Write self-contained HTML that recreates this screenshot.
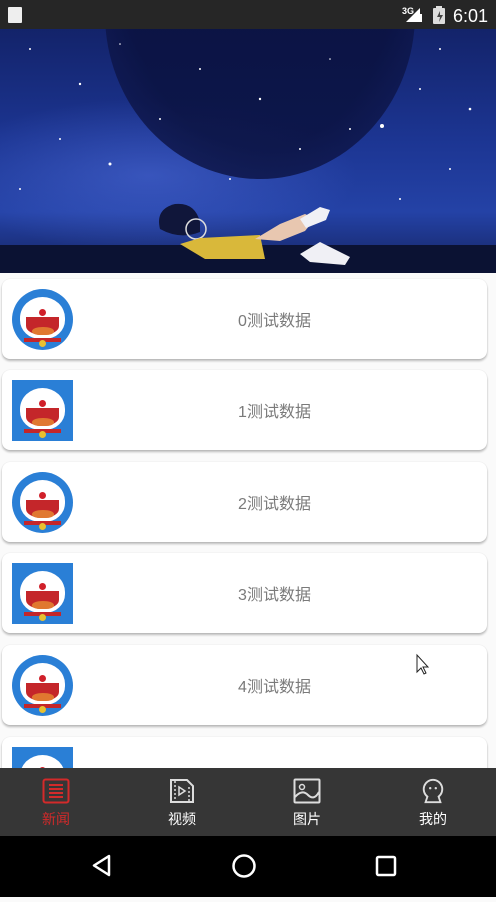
<!DOCTYPE html>
<html><head><meta charset="utf-8"><style>
*{margin:0;padding:0;box-sizing:border-box}
body{width:496px;height:897px;overflow:hidden;background:#fafafa;position:relative;font-family:"Liberation Sans","Noto Sans CJK SC",sans-serif}
.status{position:absolute;left:0;top:0;width:496px;height:29px;background:#262626;color:#fff}
.banner{position:absolute;left:0;top:29px;width:496px;height:244px;overflow:hidden;
background:radial-gradient(ellipse 60% 45% at 30% 60%,rgba(80,110,220,.5),transparent 70%),linear-gradient(180deg,#13236a 0%,#1c3592 45%,#2442a6 75%,#18296e 95%,#0a1030 100%)}
.arc{position:absolute;left:105px;top:-180px;width:310px;height:330px;border-radius:50%;background:radial-gradient(ellipse at 50% 40%,#0a113e 60%,#141f60 100%);opacity:.85}
.card{position:absolute;left:2px;width:485px;height:80px;background:#fff;border-radius:8px;box-shadow:0 2px 2px rgba(0,0,0,.25),0 0 1px rgba(0,0,0,.15)}
.card .t{position:absolute;left:60px;right:0;top:3px;line-height:80px;text-align:center;font-size:16px;color:#7a7a7a}
.pic{position:absolute;left:10px;top:10px;width:61px;height:61px;background:#2a7fd6;overflow:hidden}
.pic.r{border-radius:50%}
.face{position:absolute;left:8px;top:8px;width:45px;height:42px;background:#fff;border-radius:50% 50% 45% 45%}
.mouth{position:absolute;left:14px;top:28px;width:33px;height:18px;background:#c4262a;border-radius:0 0 50% 50%}
.tongue{position:absolute;left:20px;top:38px;width:22px;height:8px;background:#e07830;border-radius:50% 50% 40% 40%}
.nose{position:absolute;left:27px;top:20px;width:7px;height:7px;background:#d0202a;border-radius:50%}
.collar{position:absolute;left:12px;top:49px;width:37px;height:4px;background:#c4262a}
.bell{position:absolute;left:27px;top:51px;width:7px;height:7px;background:#e8c030;border-radius:50%}
.nav{position:absolute;left:0;top:768px;width:496px;height:68px;background:#363636}
.tab{position:absolute;top:0;width:124px;text-align:center;color:#fff;font-size:14px}
.tab svg{display:block;margin:10px auto 0}
.tab span{display:block;margin-top:5px}
.sys{position:absolute;left:0;top:836px;width:496px;height:61px;background:#000}
</style></head><body>
<div class="status">
<svg width="496" height="29" style="position:absolute;left:0;top:0">
<rect x="8" y="7" width="14" height="16" rx="1" fill="#eee"/>
<text x="402" y="14" font-size="9" fill="#fff" font-family="Liberation Sans" font-weight="bold">3G</text>
<path d="M406 22 L420 8 L420 22Z" fill="#fff"/><rect x="420" y="14" width="2" height="8" fill="#fff"/>
<rect x="433" y="8" width="12" height="16" rx="1" fill="#ddd"/><rect x="436" y="6" width="6" height="3" fill="#ddd"/>
<path d="M440 11 l-3 6h3l-1 5 4-7h-3z" fill="#444"/>
<text x="453" y="22" font-size="18" fill="#fff" font-family="Liberation Sans">6:01</text>
</svg></div>
<div class="banner">
<div class="arc"></div>
<svg width="496" height="244" style="position:absolute;left:0;top:0">
<g fill="#fff">
<circle cx="30" cy="20" r="1"/><circle cx="80" cy="55" r="1.2"/><circle cx="120" cy="15" r="0.8"/><circle cx="160" cy="90" r="1"/><circle cx="200" cy="40" r="1"/><circle cx="260" cy="70" r="1.2"/><circle cx="300" cy="120" r="1"/><circle cx="350" cy="100" r="1"/><circle cx="382" cy="97" r="2"/><circle cx="420" cy="60" r="1"/><circle cx="470" cy="80" r="1.3"/><circle cx="450" cy="140" r="1"/><circle cx="110" cy="135" r="1.5"/><circle cx="60" cy="110" r="1"/><circle cx="230" cy="150" r="1"/><circle cx="400" cy="170" r="1"/><circle cx="20" cy="160" r="1"/><circle cx="330" cy="30" r="0.8"/><circle cx="440" cy="20" r="1"/><circle cx="180" cy="180" r="1"/>
</g>
<rect x="0" y="216" width="496" height="28" fill="#0b1233"/>
<path d="M160 200 q-5 -20 15 -25 q20 -2 25 18 l0 10 q-20 8 -40 -3z" fill="#10163a"/>
<circle cx="196" cy="200" r="10" fill="none" stroke="#ddd" stroke-width="1.5"/>
<path d="M180 215 q10 -3 20 -6 l60 -3 l5 24 l-60 0z" fill="#d9b83a"/>
<path d="M255 210 l25 -15 l25 -10 l10 5 l-10 12 l-25 10z" fill="#e8c7b0"/>
<path d="M300 190 l20 -12 l10 3 l-4 10 l-20 8z" fill="#f0f0f5"/>
<path d="M300 225 l20 -12 l30 15 l-5 8 l-35 -3z" fill="#f0f0f5"/>
</svg>
</div>

<div class="card" style="top:279px"><div class="pic r"><div class="face"></div><div class="mouth"></div><div class="tongue"></div><div class="nose"></div><div class="collar"></div><div class="bell"></div></div><div class="t">0测试数据</div></div>
<div class="card" style="top:370px"><div class="pic"><div class="face"></div><div class="mouth"></div><div class="tongue"></div><div class="nose"></div><div class="collar"></div><div class="bell"></div></div><div class="t">1测试数据</div></div>
<div class="card" style="top:462px"><div class="pic r"><div class="face"></div><div class="mouth"></div><div class="tongue"></div><div class="nose"></div><div class="collar"></div><div class="bell"></div></div><div class="t">2测试数据</div></div>
<div class="card" style="top:553px"><div class="pic"><div class="face"></div><div class="mouth"></div><div class="tongue"></div><div class="nose"></div><div class="collar"></div><div class="bell"></div></div><div class="t">3测试数据</div></div>
<div class="card" style="top:645px"><div class="pic r"><div class="face"></div><div class="mouth"></div><div class="tongue"></div><div class="nose"></div><div class="collar"></div><div class="bell"></div></div><div class="t">4测试数据</div></div>
<div class="card" style="top:737px"><div class="pic"><div class="face"></div><div class="nose"></div></div><div class="t">5测试数据</div></div>

<svg width="30" height="30" style="position:absolute;left:412px;top:652px"><path d="M5 3 L5 20 L9 16 L12 22 L14 21 L11 15 L16 15 Z" fill="#fff" stroke="#222" stroke-width="1"/></svg>

<div class="nav">
<div class="tab" style="left:-6px;color:#d32a2a"><svg width="28" height="26" viewBox="0 0 28 26"><rect x="1.5" y="1.5" width="25" height="23" rx="2" fill="none" stroke="#d32a2a" stroke-width="2"/><path d="M7 7h14M7 11h14M7 15h14M7 19h14" stroke="#d32a2a" stroke-width="2"/></svg><span>新闻</span></div>
<div class="tab" style="left:120px"><svg width="26" height="26" viewBox="0 0 26 26"><path d="M2 2h16l6 6v16H2z" fill="none" stroke="#ddd" stroke-width="2"/><path d="M6 3v21M20 9v15" stroke="#ddd" stroke-width="1.5" stroke-dasharray="2 2"/><path d="M10 9l6 4-6 4z" fill="none" stroke="#ddd" stroke-width="1.5"/></svg><span>视频</span></div>
<div class="tab" style="left:245px"><svg width="28" height="26" viewBox="0 0 28 26"><rect x="1.5" y="1.5" width="25" height="23" rx="1" fill="none" stroke="#ddd" stroke-width="2"/><circle cx="9" cy="9" r="2.5" fill="none" stroke="#ddd" stroke-width="1.5"/><path d="M2 19q7-8 13-2t11-3" fill="none" stroke="#ddd" stroke-width="2"/></svg><span>图片</span></div>
<div class="tab" style="left:371px"><svg width="24" height="26" viewBox="0 0 24 28"><path d="M12 2a10 10 0 0 0-6 18l-2 6h16l-2-6a10 10 0 0 0-6-18z" fill="none" stroke="#ddd" stroke-width="2"/><circle cx="9" cy="11" r="1.3" fill="#ddd"/><circle cx="15" cy="11" r="1.3" fill="#ddd"/></svg><span>我的</span></div>
</div>
<div class="sys"><svg width="496" height="61">
<path d="M109 20 L94 29.5 L109 39 Z" fill="none" stroke="#fff" stroke-width="2.5" stroke-linejoin="round"/>
<circle cx="244" cy="30" r="10.5" fill="none" stroke="#fff" stroke-width="2.5"/>
<rect x="377" y="21" width="18" height="18" rx="1.5" fill="none" stroke="#fff" stroke-width="2.5"/>
</svg></div>
</body></html>
